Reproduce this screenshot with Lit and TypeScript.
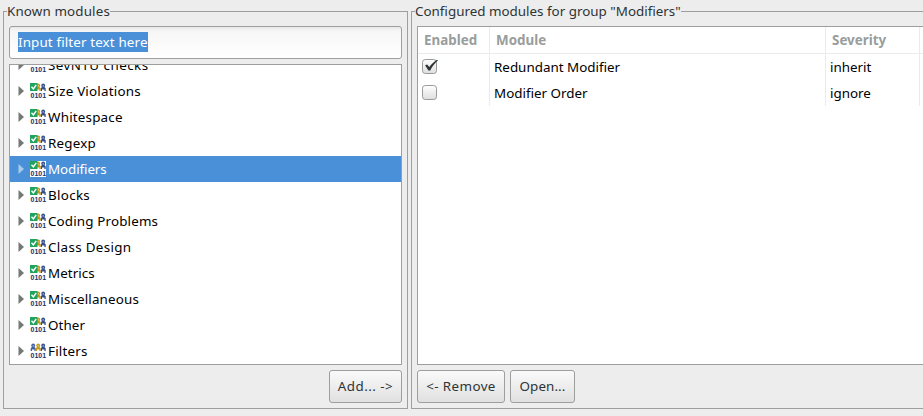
import { LitElement, html, svg, css } from "lit";
import { customElement, property } from "lit/decorators.js";

const person = (x: number, fill: string, face: string) => svg`
  <circle cx=${x + 2.5} cy="2.500" r="1.900" fill=${fill}/>
  <path fill=${fill} d="M${x} 8V5.200l1.300-1.200h2.400L${x + 5} 5.200V8h-1.300V6.600h-2.400V8z"/>
  <path fill=${face} d="M${x + 2} 2.200h1v1.300h-1z"/>`;

@customElement("module-icon")
class ModuleIcon extends LitElement {
  @property({ type: Boolean }) checked = false;
  static styles = css`
    :host { display: block; width: 17px; height: 17px; flex: none; }
    svg { display: block; overflow: visible; }
    .digits { font: bold 8px "Liberation Sans", sans-serif; fill: #1c3468; }
  `;
  render() {
    return html`<svg width="17" height="17" viewBox="0 0 17 17">
      <rect width="16" height="16" fill="#fff"/>
      ${person(0.7, "#40609f", "#d5dcec")}${person(10.7, "#344f8e", "#d5dcec")}${person(5.7, "#c69a1c", "#f3e3a8")}
      <text class="digits" x="0.500" y="14.800" textLength="15.500" lengthAdjust="spacingAndGlyphs">0101</text>
      ${this.checked ? svg`<rect width="7.500" height="8" fill="#20a45c"/>
        <path d="M1.500 3.800l1.900 2.100L6.200 1.800" fill="none" stroke="#fff" stroke-width="1.400"/>` : ""}
    </svg>`;
  }
}

@customElement("tree-row")
class TreeRow extends LitElement {
  @property() label = "";
  @property({ type: Number }) spacing = 0;
  @property({ type: Boolean }) checked = true;
  @property({ type: Boolean, reflect: true }) selected = false;
  static styles = css`
    :host { display: flex; align-items: center; height: 26px; padding-left: 8px; color: #000; white-space: nowrap; }
    :host([selected]) { background: #4a90d9; color: #fff; }
    .arrow { width: 6px; height: 10px; margin-right: 6px; fill: #747877; flex: none; }
    :host([selected]) .arrow { fill: #a9caea; }
    .label { margin-left: 1px; line-height: 26px; }
  `;
  render() {
    return html`<svg class="arrow" viewBox="0 0 6 10"><path d="M.5 0v10L6 5z"/></svg>
      <module-icon .checked=${this.checked}></module-icon><span class="label" style="letter-spacing:${this.spacing}px">${this.label}</span>`;
  }
}

@customElement("check-box")
class CheckBox extends LitElement {
  @property({ type: Boolean }) checked = false;
  static styles = css`
    :host { display: block; width: 18px; height: 17px; }
    svg { display: block; overflow: visible; }
  `;
  render() {
    return html`<svg width="18" height="17" viewBox="0 0 18 17">
      <defs><linearGradient id="g" x2="0" y2="1"><stop stop-color="#fff"/><stop offset="1" stop-color="#dedede"/></linearGradient></defs>
      <rect x=".5" y="1.500" width="14" height="14" rx="2.800" fill="url(#g)" stroke="#999b99"/>
      ${this.checked ? svg`<path d="M3.100 7.200l2-.6 2.200 2.500C9.300 6.300 11.800 3.800 14.600 2h1.600C12.800 5.300 10.200 8.500 8.200 12.400H6.400z" fill="#2e3436"/>` : ""}
    </svg>`;
  }
}

/* Group name and its tracking in pixels. */
const modules: [string, number][] = [
  ["SevNTU checks", 0.46], ["Size Violations", 0.2], ["Whitespace", 0.2], ["Regexp", 0.22],
  ["Modifiers", -0.1], ["Blocks", 0.3], ["Coding Problems", 0.15], ["Class Design", 0.33],
  ["Metrics", 0.06], ["Miscellaneous", 0.15], ["Other", 0.1], ["Filters", 0.2],
];

@customElement("app-root")
class AppRoot extends LitElement {
  static styles = css`
    :host {
      display: flex; gap: 3px; box-sizing: border-box; width: 923px; height: 416px; padding: 3px 0 7px 3px;
      overflow: hidden; background: #ededed; color: #2e3436;
      font: 13.4px "Noto Sans", "Open Sans", sans-serif;
    }
    .group { display: flex; flex-direction: column; box-sizing: border-box; height: 406px; flex: none; }
    .known { width: 405px; }
    .configured { width: 520px; }
    .legend { display: flex; height: 17px; line-height: 17px; white-space: nowrap; }
    .known .legend { letter-spacing: 0.13px; }
    .legend::before, .legend::after { content: ""; box-sizing: border-box; margin-top: 8px; border-top: 1px solid #9c9f9c; }
    .legend::before { width: 4px; border-left: 1px solid #9c9f9c; }
    .legend::after { flex: 1; border-right: 1px solid #9c9f9c; }
    .body { flex: 1; display: flex; flex-direction: column; box-sizing: border-box; padding: 6px 5px 5px; border: solid #9c9f9c; border-width: 0 1px 1px; }
    .filter { box-sizing: border-box; height: 33px; padding: 5px 8px; border: 1px solid #9c9f9c; border-radius: 3px; background: linear-gradient(#e8e8e8, #f6f6f6 4px, #fff); }
    .picked { display: inline-block; height: 20px; line-height: 20px; letter-spacing: 0.13px; background: #4a90d9; color: #fff; white-space: nowrap; }
    .tree { box-sizing: border-box; height: 301px; margin-top: 5px; border: 1px solid #9c9f9c; background: #fff; overflow: hidden; }
    .rows { margin-top: -13px; }
    .table { box-sizing: border-box; height: 339px; border: 1px solid #9c9f9c; background: #fff; overflow: hidden; }
    .tr { display: grid; grid-template-columns: 72px 336px 94px 1fr; height: 26px; line-height: 26px; color: #000; }
    .td { box-sizing: border-box; padding-left: 4px; border-right: 1px solid #ebebeb; white-space: nowrap; }
    .td:last-child { border-right: 0; }
    .head { height: 27px; border-bottom: 1px solid #ebebeb; box-sizing: border-box; color: #999d9c; font-weight: bold; }
    .head .td { padding-left: 6px; }
    .box { padding-top: 4px; }
    .buttons { display: flex; gap: 5px; margin-top: 5px; }
    .end { justify-content: flex-end; }
    .button { box-sizing: border-box; height: 33px; line-height: 31px; border: 1px solid #9c9f9c; border-radius: 3px; background: linear-gradient(#fafafa, #e0e0e0); text-align: center; white-space: nowrap; }
    .add { width: 73px; letter-spacing: 0.45px; }
    .remove { width: 88px; letter-spacing: 0.4px; }
    .open { width: 65px; letter-spacing: 0.1px; }
  `;
  render() {
    return html`
      <section class="group known">
        <div class="legend"><span>Known modules</span></div>
        <div class="body">
          <div class="filter"><span class="picked">Input filter text here</span></div>
          <div class="tree"><div class="rows">
            ${modules.map(([name, spacing]) => html`<tree-row .label=${name} .spacing=${spacing} .checked=${name !== "Filters"} ?selected=${name === "Modifiers"}></tree-row>`)}
          </div></div>
          <div class="buttons end"><div class="button add">Add... -&gt;</div></div>
        </div>
      </section>
      <section class="group configured">
        <div class="legend"><span>Configured modules for group "Modifiers"</span></div>
        <div class="body">
          <div class="table">
            <div class="tr head"><div class="td">Enabled</div><div class="td">Module</div><div class="td">Severity</div><div class="td"></div></div>
            <div class="tr"><div class="td box"><check-box checked></check-box></div><div class="td">Redundant Modifier</div><div class="td">inherit</div><div class="td"></div></div>
            <div class="tr"><div class="td box"><check-box></check-box></div><div class="td">Modifier Order</div><div class="td">ignore</div><div class="td"></div></div>
          </div>
          <div class="buttons"><div class="button remove">&lt;- Remove</div><div class="button open">Open...</div></div>
        </div>
      </section>`;
  }
}
